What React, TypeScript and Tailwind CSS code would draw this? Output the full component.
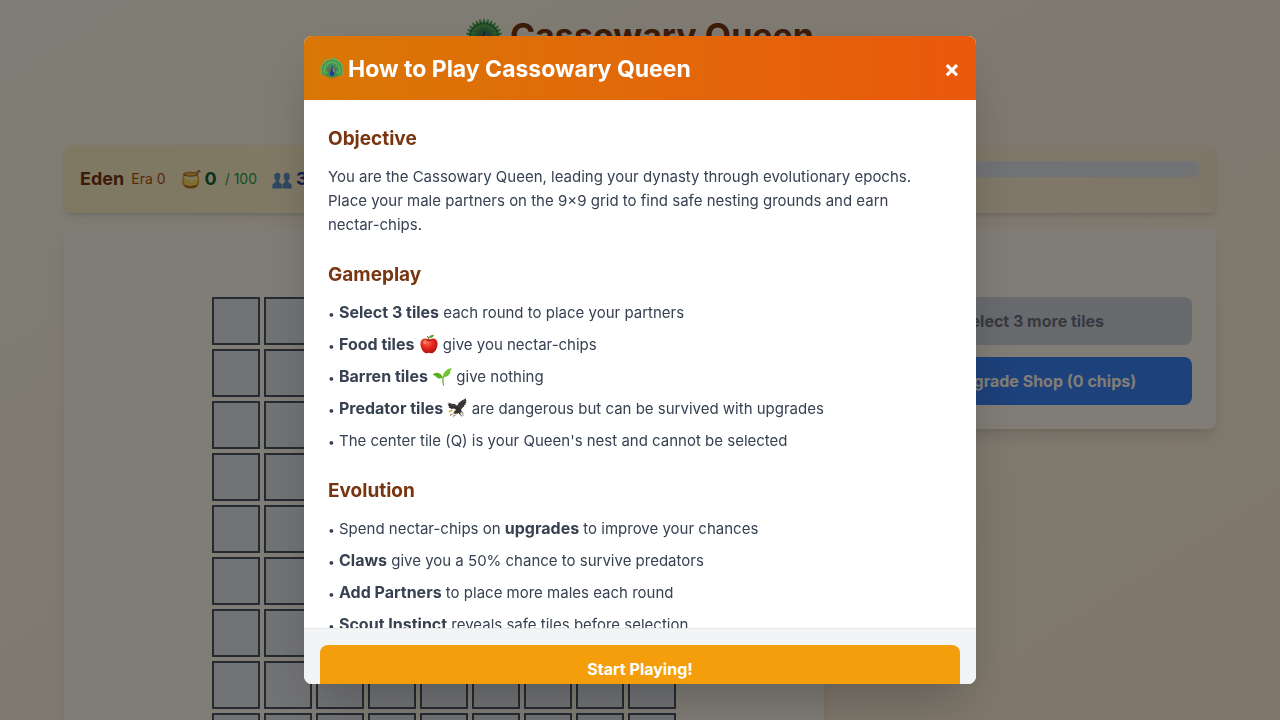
import type { ReactNode } from "react";

type IconProps = { className?: string };

const FEATHERS = Array.from({ length: 19 }, (_, i) => -117 + i * 13);
const INNER_FEATHERS = Array.from({ length: 13 }, (_, i) => -108 + i * 18);

function Peacock({ className }: IconProps) {
  return (
    <svg viewBox="1 1 30 30" className={className} aria-hidden="true">
      <ellipse cx="16" cy="16" rx="12.5" ry="11" fill="#3a8f4c" />
      {FEATHERS.map((a) => (
        <g key={a} transform={`rotate(${a} 16 17)`}>
          <path d="M16 17 L14.7 4.5 L15.3 2.4 L16 1.2 L16.7 2.4 L17.3 4.5 Z" fill="#5bb45a" />
          <circle cx="16" cy="5.4" r="0.8" fill="#23685c" />
        </g>
      ))}
      {INNER_FEATHERS.map((a) => (
        <g key={a} transform={`rotate(${a} 16 17)`}>
          <path d="M16 17 L15.1 9.5 Q16 7 16.9 9.5 Z" fill="#2f7d62" />
          <circle cx="16" cy="9.6" r="0.7" fill="#8f8f45" />
        </g>
      ))}
      <ellipse cx="16" cy="18.6" rx="4.8" ry="5" fill="#5f7048" />
      <path d="M15 13 Q16.8 12 17.1 14 Q16.6 17 18.5 20 Q19.3 24.5 16 25.3 Q12.8 24.5 13.5 20.5 Q15.6 17.5 15 13Z" fill="#1a3ba0" />
      <path d="M14.9 13.4 L13.6 14.1 L15.1 14.4Z" fill="#e5c35b" />
      <path d="M17.2 15 Q17.2 18 18.6 20" stroke="#e0bd3a" strokeWidth="0.8" fill="none" />
      <path d="M15.2 25 V29.5 M16.8 25 V28.6" stroke="#a76d37" strokeWidth="0.8" />
    </svg>
  );
}

function HoneyPot({ className }: IconProps) {
  return (
    <svg viewBox="0 0 32 32" className={className} aria-hidden="true">
      <path d="M22 9 L28.5 3" stroke="#a65d35" strokeWidth="2" />
      <ellipse cx="28.7" cy="3.5" rx="2.5" ry="2" fill="#bd7448" />
      <path d="M4.5 9 Q0 18 3 25 Q6 31.5 15.5 31.5 Q25 31.5 28 25 Q31 18 26.5 9Z" fill="#d9962f" />
      <path d="M5 12 Q2.5 20 5.5 24.5 Q15 30 25.5 24.5 Q28.5 20 26 12Z" fill="#ffd95e" />
      <path d="M6 11 H25 V17 Q23 22 21.5 16 Q19 15 18.5 20 Q16.5 25 15.5 19 Q14 15 12 18 Q10 20 9.5 16 Q6.5 18 6 14Z" fill="#fff3b4" />
      <ellipse cx="15.5" cy="8.5" rx="12.5" ry="4" fill="#a8682c" />
      <ellipse cx="15.5" cy="8" rx="10" ry="2.6" fill="#f2b53c" />
      <path d="M6 27 Q15 31.5 25 27" stroke="#9b5427" strokeWidth="1.6" fill="none" />
    </svg>
  );
}

function People({ className }: IconProps) {
  return (
    <svg viewBox="0 0 32 32" className={className} aria-hidden="true">
      <g fill="#5f8fc4">
        <path d="M8.5 6 Q13.5 6 13.3 12 Q13 16.5 11 18.5 Q10.8 21.5 13 22.5 Q16 23.5 16 27 V31 H0.5 V27 Q.5 23.5 4 22.5 Q6.3 21.5 6 18.5 Q3.7 16.5 3.6 12 Q3.5 6 8.5 6Z" />
        <path d="M23.5 6 Q28.5 6 28.4 12 Q28.3 16.5 26 18.5 Q25.7 21.5 28 22.5 Q31.5 23.5 31.5 27 V31 H16.8 V27 Q16.5 23.5 19 22.5 Q21.2 21.5 21 18.5 Q18.7 16.5 18.7 12 Q18.5 6 23.5 6Z" />
      </g>
    </svg>
  );
}

function Apple({ className }: IconProps) {
  return (
    <svg viewBox="0 0 32 32" className={className} aria-hidden="true">
      <defs>
        <radialGradient id="apple-skin" cx="0.4" cy="0.3" r="0.75">
          <stop offset="0" stopColor="#ff6a50" />
          <stop offset="0.45" stopColor="#e5281d" />
          <stop offset="1" stopColor="#a9120f" />
        </radialGradient>
      </defs>
      <path d="M16 9.2 Q23 5 27.5 9 Q31 13 29 20.5 Q27 28.5 22 30.3 Q18.8 31.4 16 30 Q13 31.4 10 30.3 Q5 28 3 20.5 Q1 13 4.8 9 Q9.3 5 16 9.2Z" fill="url(#apple-skin)" />
      <path d="M11 9.5 Q16 12.5 21 9.5 Q16 7.8 11 9.5Z" fill="#981710" />
      <path d="M16 10.6 Q15.4 6 13.4 3.2" stroke="#70421f" strokeWidth="1.5" fill="none" />
      <path d="M15.5 6.2 Q17 1 24 1 Q22.5 6.8 15.5 6.2Z" fill="#53a22c" />
      <ellipse cx="9" cy="13" rx="2.4" ry="3.2" fill="#fff" opacity="0.3" />
    </svg>
  );
}

function Seedling({ className }: IconProps) {
  return (
    <svg viewBox="0 0 32 32" className={className} aria-hidden="true">
      <path d="M19 14 Q14.5 20 17.6 31 Q18.4 32 19.3 30.8 Q17 22 20.2 15Z" fill="#5fa52b" />
      <path d="M17.2 18.7 Q15 11.8 8.3 10.7 Q3.4 10.3 .6 14.6 Q4.5 14.4 6.8 17.4 Q11.5 21.8 17.2 18.7Z" fill="#58b01f" />
      <path d="M16.8 17.8 Q19 5.5 31.5 3.2 Q29.3 7.5 28.6 11.4 Q26 17.7 16.8 17.8Z" fill="#6cc42a" />
      <path d="M17.6 17 Q22 9 29 5" stroke="#9ad850" strokeWidth="0.7" fill="none" />
    </svg>
  );
}

function Eagle({ className }: IconProps) {
  return (
    <svg viewBox="0 0 32 32" className={className} aria-hidden="true">
      <path d="M16.4 12.5 Q18 6.5 23.2 4.3 L30.6 .4 L30 3.8 L31.6 4 L29.8 6.4 L31.3 7 L28.8 9.2 L30 10.2 L27 11.7 L27.8 13 L23.7 16.5 L22.5 20 L27.5 25 L26 25.4 L27 28 L24.2 26.8 L24.3 30 L21 27 L18.5 24 Q15 26.6 10.4 24.3 L12 20 Q8 19.4 5 15.8 L2.6 15.5 L3.8 14 L1.3 12.5 L3.2 11.6 L.4 9 L3.5 9.3 L2 7 L7 9 L12 9.6 Z" fill="#33302f" />
      <path d="M18 15 Q20 9 29.8 2 M19 17 Q23 13 27 11 M15 13 Q10 13 4 10" stroke="#655d58" strokeWidth="0.8" fill="none" />
      <path d="M14 18 Q10.5 15.8 7.4 17.7 Q4.7 19.6 6.3 22 Q9 23.3 13.5 20.5Z" fill="#f4eee2" />
      <path d="M6.8 19 Q2 19.4 3.2 23.3 Q4.3 22 6.8 22.2Z" fill="#e1aa20" />
      <circle cx="7.8" cy="19.4" r=".5" fill="#231c16" />
      <path d="M12 24 Q9 27 4.8 26.4 M16 24 Q14 29 10 28.4 M6.7 26.4 L5 29 M11 28 L9.5 31" stroke="#a5835a" strokeWidth="1.3" fill="none" />
      <path d="M22 22 L28.2 24.8 L26.5 27 L24 29.8 L21 25Z" fill="#d6cfc4" />
    </svg>
  );
}

function Cart({ className }: IconProps) {
  return (
    <svg viewBox="0 0 24 24" className={className} fill="none" stroke="currentColor" strokeWidth="2" aria-hidden="true">
      <path d="M2 3h3l3 12h11l3-9H6" />
      <circle cx="9" cy="20" r="1.5" />
      <circle cx="18" cy="20" r="1.5" />
    </svg>
  );
}

const TILES = Array.from({ length: 81 }, (_, i) => i);
const INLINE_ICON = "inline-block size-5 align-[-4px]";

function Section({ title, children }: { title: string; children: ReactNode }) {
  return (
    <section>
      <h3 className="mb-3 text-[19px] leading-7 font-bold text-[#78350f]">{title}</h3>
      {children}
    </section>
  );
}

function Bullet({ children }: { children: ReactNode }) {
  return (
    <li>
      <span className="text-xs leading-none">•</span> {children}
    </li>
  );
}

function Term({ children }: { children: ReactNode }) {
  return <strong className="text-base leading-none">{children}</strong>;
}

function Game() {
  return (
    <div className="min-h-screen bg-linear-to-br from-[#fffbeb] to-[#ffedd5] p-4">
      <main className="mx-auto max-w-6xl">
        <header className="mb-4 flex h-[113px] flex-col items-center">
          <h1 className="flex items-center gap-2 text-[34px] leading-10 font-bold text-[#78350f]">
            <Peacock className="size-9" />
            Cassowary Queen
          </h1>
        </header>

        <div className="mb-4 flex items-center justify-between gap-4 rounded-lg bg-linear-to-r from-[#fef3c7] to-[#ffedd5] p-4 shadow-md">
          <div className="flex items-center gap-[15px]">
            <div className="flex items-center gap-[7px]">
              <span className="text-lg font-bold text-[#78350f]">Eden</span>
              <span className="text-sm text-[#b45309]">Era 0</span>
            </div>
            <div className="flex items-center gap-1">
              <HoneyPot className="size-5" />
              <span className="mr-1 text-lg font-bold text-[#166534]">0</span>
              <span className="text-sm text-[#16a34a]">/ 100</span>
            </div>
            <div className="flex items-center gap-1">
              <People className="size-5" />
              <span className="text-lg font-bold text-[#1e40af]">3</span>
            </div>
          </div>
          <div className="mb-5 h-4 w-80 rounded-full bg-[#e5e7eb]" />
        </div>

        <div className="grid grid-cols-3 items-start gap-6">
          <div className="col-span-2 rounded-lg bg-[#fffbeb] p-6 pt-17 shadow-lg">
            <div className="mx-auto grid w-fit grid-cols-9 gap-1">
              {TILES.map((t) => (
                <button key={t} type="button" aria-label={`Tile ${t + 1}`} className="size-12 border-2 border-[#4b5563] bg-[#e5e7eb]" />
              ))}
            </div>
          </div>
          <div className="flex flex-col gap-3 rounded-lg bg-[#fffbeb] p-6 pt-17 shadow-lg">
            <button type="button" disabled className="h-12 rounded-lg bg-[#d1d5db] font-bold text-[#6b7280]">
              Select 3 more tiles
            </button>
            <button type="button" className="flex h-12 items-center justify-center gap-1 rounded-lg bg-[#3b82f6] font-bold text-[#fffbeb]">
              <Cart className="size-5" />
              Upgrade Shop (0 chips)
            </button>
          </div>
        </div>
      </main>
    </div>
  );
}

export default function App() {
  return (
    <div className="font-['Inter','Liberation_Sans',sans-serif]">
      <div className="h-screen overflow-hidden">
        <Game />
      </div>
      <div className="fixed inset-0 flex items-center justify-center bg-black/50 p-4">
        <div role="dialog" aria-modal="true" aria-labelledby="rules-title" className="max-h-[90vh] w-full max-w-2xl overflow-hidden rounded-lg bg-white shadow-2xl">
          <div className="flex items-center justify-between bg-linear-to-r from-[#d97706] to-[#ea580c] px-4 pt-[17px] pb-[15px] text-white">
            <h2 id="rules-title" className="flex items-center gap-1 text-[23px] leading-8 font-bold">
              <Peacock className="size-6" />
              How to Play Cassowary Queen
            </h2>
            <button type="button" aria-label="Close" className="text-2xl font-bold">
              ×
            </button>
          </div>

          <div className="max-h-[calc(90vh-120px)] space-y-6 overflow-y-auto px-6 pt-[25px] pb-6 text-[15px] leading-6 text-[#374151] [scrollbar-width:none]">
            <Section title="Objective">
              <p>
                You are the Cassowary Queen, leading your dynasty through evolutionary epochs. Place your male partners on
                the 9×9 grid to find safe nesting grounds and earn <span className="whitespace-nowrap">nectar-chips.</span>
              </p>
            </Section>
            <Section title="Gameplay">
              <ul className="space-y-2">
                <Bullet><Term>Select 3 tiles</Term> each round to place your partners</Bullet>
                <Bullet><Term>Food tiles</Term> <Apple className={INLINE_ICON} /> give you nectar-chips</Bullet>
                <Bullet><Term>Barren tiles</Term> <Seedling className={INLINE_ICON} /> give nothing</Bullet>
                <Bullet><Term>Predator tiles</Term> <Eagle className={INLINE_ICON} /> are dangerous but can be survived with upgrades</Bullet>
                <Bullet>The center tile (Q) is your Queen's nest and cannot be selected</Bullet>
              </ul>
            </Section>
            <Section title="Evolution">
              <ul className="space-y-2">
                <Bullet>Spend nectar-chips on <Term>upgrades</Term> to improve your chances</Bullet>
                <Bullet><Term>Claws</Term> give you a 50% chance to survive predators</Bullet>
                <Bullet><Term>Add Partners</Term> to place more males each round</Bullet>
                <Bullet><Term>Scout Instinct</Term> reveals safe tiles before selection</Bullet>
              </ul>
            </Section>
          </div>

          <div className="border-t border-[#e5e7eb] bg-[#f3f4f6] p-4">
            <button type="button" className="h-12 w-full rounded-lg bg-[#f59e0b] font-bold text-white">
              Start Playing!
            </button>
          </div>
        </div>
      </div>
    </div>
  );
}
